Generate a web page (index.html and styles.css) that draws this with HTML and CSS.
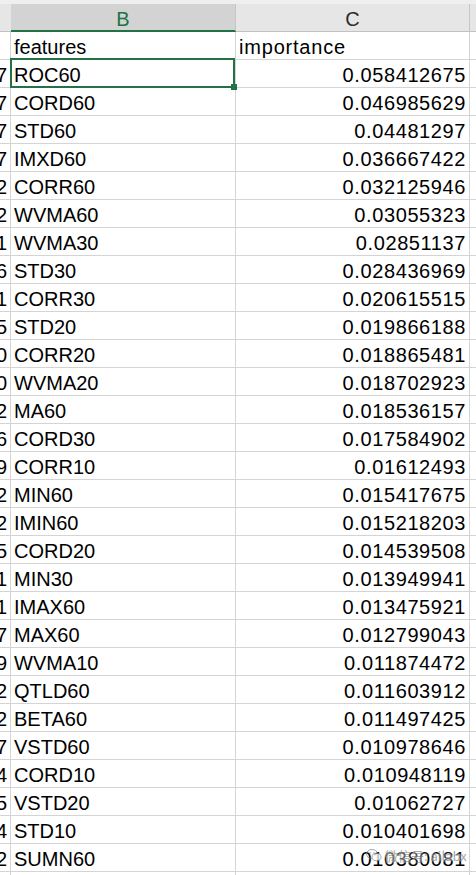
FILE: index.html
```html
<!DOCTYPE html>
<html>
<head>
<meta charset="utf-8">
<link rel="stylesheet" href="styles.css">
</head>
<body>
<div class="sheet">
  <div class="hdr">
    <div class="hc hc-a"></div>
    <div class="hc hc-sel">B</div>
    <div class="hc">C</div>
    <div class="hc hc-d"></div>
  </div>
  <div class="row"><div class="c a"></div><div class="c b">features</div><div class="c t">importance</div><div class="c d"></div></div>
  <div class="row"><div class="c a">7</div><div class="c b sel">ROC60<span class="selbox"><span class="handle"></span></span></div><div class="c n">0.058412675</div><div class="c d"></div></div>
  <div class="row"><div class="c a">7</div><div class="c b">CORD60</div><div class="c n">0.046985629</div><div class="c d"></div></div>
  <div class="row"><div class="c a">7</div><div class="c b">STD60</div><div class="c n">0.04481297</div><div class="c d"></div></div>
  <div class="row"><div class="c a">7</div><div class="c b">IMXD60</div><div class="c n">0.036667422</div><div class="c d"></div></div>
  <div class="row"><div class="c a">2</div><div class="c b">CORR60</div><div class="c n">0.032125946</div><div class="c d"></div></div>
  <div class="row"><div class="c a">2</div><div class="c b">WVMA60</div><div class="c n">0.03055323</div><div class="c d"></div></div>
  <div class="row"><div class="c a">1</div><div class="c b">WVMA30</div><div class="c n">0.02851137</div><div class="c d"></div></div>
  <div class="row"><div class="c a">6</div><div class="c b">STD30</div><div class="c n">0.028436969</div><div class="c d"></div></div>
  <div class="row"><div class="c a">1</div><div class="c b">CORR30</div><div class="c n">0.020615515</div><div class="c d"></div></div>
  <div class="row"><div class="c a">5</div><div class="c b">STD20</div><div class="c n">0.019866188</div><div class="c d"></div></div>
  <div class="row"><div class="c a">0</div><div class="c b">CORR20</div><div class="c n">0.018865481</div><div class="c d"></div></div>
  <div class="row"><div class="c a">0</div><div class="c b">WVMA20</div><div class="c n">0.018702923</div><div class="c d"></div></div>
  <div class="row"><div class="c a">2</div><div class="c b">MA60</div><div class="c n">0.018536157</div><div class="c d"></div></div>
  <div class="row"><div class="c a">6</div><div class="c b">CORD30</div><div class="c n">0.017584902</div><div class="c d"></div></div>
  <div class="row"><div class="c a">9</div><div class="c b">CORR10</div><div class="c n">0.01612493</div><div class="c d"></div></div>
  <div class="row"><div class="c a">2</div><div class="c b">MIN60</div><div class="c n">0.015417675</div><div class="c d"></div></div>
  <div class="row"><div class="c a">2</div><div class="c b">IMIN60</div><div class="c n">0.015218203</div><div class="c d"></div></div>
  <div class="row"><div class="c a">5</div><div class="c b">CORD20</div><div class="c n">0.014539508</div><div class="c d"></div></div>
  <div class="row"><div class="c a">1</div><div class="c b">MIN30</div><div class="c n">0.013949941</div><div class="c d"></div></div>
  <div class="row"><div class="c a">1</div><div class="c b">IMAX60</div><div class="c n">0.013475921</div><div class="c d"></div></div>
  <div class="row"><div class="c a">7</div><div class="c b">MAX60</div><div class="c n">0.012799043</div><div class="c d"></div></div>
  <div class="row"><div class="c a">9</div><div class="c b">WVMA10</div><div class="c n">0.011874472</div><div class="c d"></div></div>
  <div class="row"><div class="c a">2</div><div class="c b">QTLD60</div><div class="c n">0.011603912</div><div class="c d"></div></div>
  <div class="row"><div class="c a">2</div><div class="c b">BETA60</div><div class="c n">0.011497425</div><div class="c d"></div></div>
  <div class="row"><div class="c a">7</div><div class="c b">VSTD60</div><div class="c n">0.010978646</div><div class="c d"></div></div>
  <div class="row"><div class="c a">4</div><div class="c b">CORD10</div><div class="c n">0.010948119</div><div class="c d"></div></div>
  <div class="row"><div class="c a">5</div><div class="c b">VSTD20</div><div class="c n">0.01062727</div><div class="c d"></div></div>
  <div class="row"><div class="c a">4</div><div class="c b">STD10</div><div class="c n">0.010401698</div><div class="c d"></div></div>
  <div class="row"><div class="c a">2</div><div class="c b">SUMN60</div><div class="c n">0.010380081</div><div class="c d"></div></div>
  <div class="row"><div class="c a"></div><div class="c b"></div><div class="c n"></div><div class="c d"></div></div>
</div>
<div class="wm">
  <svg class="wm-icon" width="16" height="13" viewBox="0 0 16 13"><ellipse cx="6" cy="5" rx="5.5" ry="4.5" fill="none" stroke="#8a8a8a" stroke-width="1"/><ellipse cx="10.5" cy="8" rx="4.5" ry="3.7" fill="#fff" stroke="#8a8a8a" stroke-width="1"/><circle cx="4" cy="4" r="0.8" fill="#8a8a8a"/><circle cx="8" cy="4" r="0.8" fill="#8a8a8a"/></svg>
  <span class="wm-text">微信号: ailabx</span>
</div>
</body>
</html>
```
FILE: styles.css
```css
html, body {
  margin: 0;
  padding: 0;
  background: #fff;
  overflow: hidden;
}
body {
  width: 476px;
  height: 875px;
  position: relative;
  font-family: "Liberation Sans", Arial, "Noto Sans CJK SC", sans-serif;
  font-size: 20px;
  color: #000;
}
.sheet {
  display: flex;
  flex-direction: column;
}
.hdr, .row {
  display: grid;
  grid-template-columns: 11px 225px 234px 1fr;
}
.hdr {
  border-top: 4px solid #efefef;
  box-sizing: border-box;
  height: 32px;
}
.hc {
  background: #e6e6e6;
  border-right: 1px solid #c6c6c6;
  border-bottom: 1px solid #c2c2c2;
  box-sizing: border-box;
  height: 28px;
  text-align: center;
  padding-top: 3px;
  line-height: 24px;
  color: #2b2b2b;
}
.hc-a { border-right: none; }
.hc-d { border-right: none; }
.hc-sel {
  background: #d3d3d3;
  color: #217346;
  border-bottom: 2px solid #217346;
}
.c {
  box-sizing: border-box;
  height: 28px;
  border-right: 1px solid #d4d4d4;
  border-bottom: 1px solid #d4d4d4;
  padding-top: 3px;
  line-height: 24px;
  white-space: nowrap;
  overflow: hidden;
}
.a {
  display: flex;
  justify-content: flex-end;
  padding-right: 3px;
}
.b, .t {
  padding-left: 3px;
}
.t {
  letter-spacing: 0.8px;
}
.n {
  text-align: right;
  padding-right: 3px;
  letter-spacing: 0.6px;
}
.d { border-right: none; }
.sel {
  position: relative;
  overflow: visible;
}
.selbox {
  position: absolute;
  left: -1px;
  top: -2px;
  right: 0;
  bottom: -1px;
  border: 2px solid #217346;
  z-index: 2;
}
.handle {
  position: absolute;
  right: -4px;
  bottom: -4px;
  width: 6px;
  height: 6px;
  background: #217346;
}
.wm {
  position: absolute;
  left: 366px;
  top: 846px;
  display: flex;
  align-items: center;
  gap: 3px;
  opacity: 0.75;
}
.wm-text {
  font-family: "Noto Sans CJK SC", sans-serif;
  font-size: 13px;
  color: #8a8a8a;
  text-shadow: 0 0 2px #fff, 0 0 2px #fff;
}
```
